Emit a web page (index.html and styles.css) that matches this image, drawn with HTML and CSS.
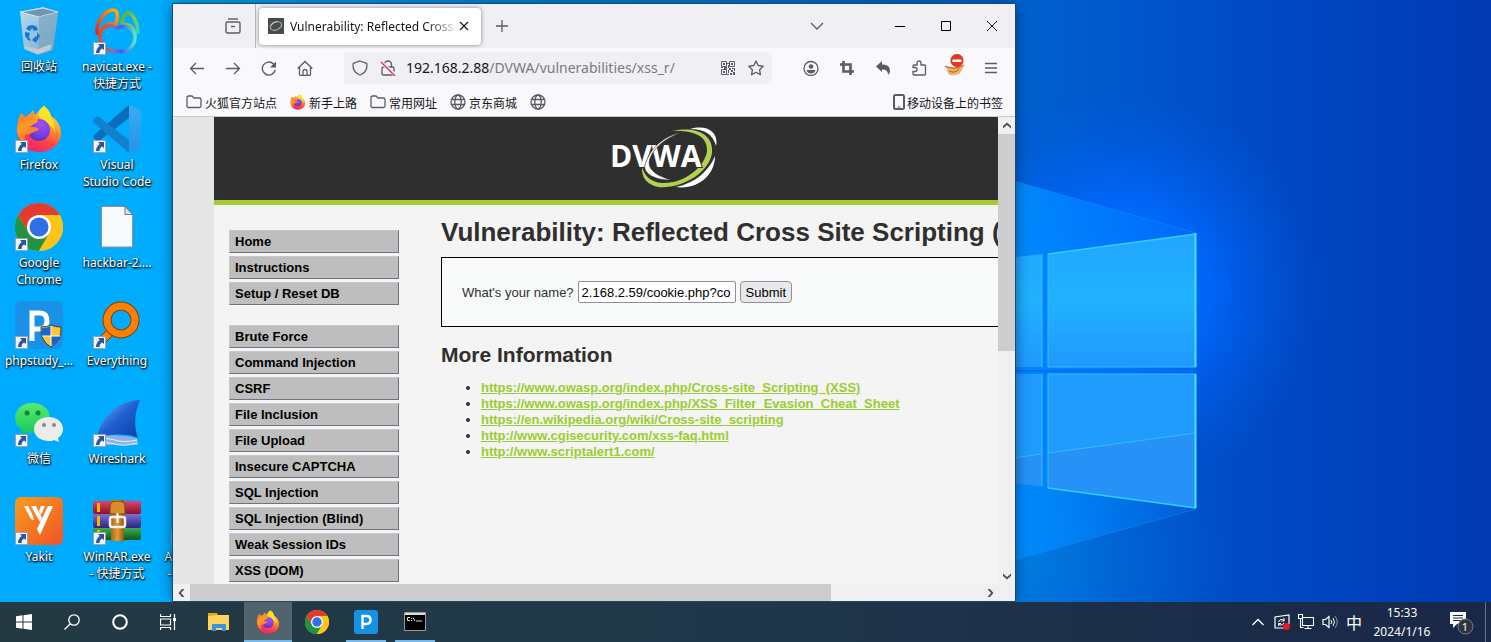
FILE: index.html
```html
<!DOCTYPE html>
<html lang="zh-CN">
<head>
<meta charset="utf-8">
<title>Desktop</title>
<link rel="stylesheet" href="styles.css">
</head>
<body>
<svg class="defs" aria-hidden="true">
  <defs>
    <linearGradient id="ff-body" x1="0.8" y1="0" x2="0.3" y2="1"><stop offset="0" stop-color="#fff44f"/><stop offset="0.35" stop-color="#ffa32c"/><stop offset="0.65" stop-color="#ff4a3f"/><stop offset="1" stop-color="#e81e74"/></linearGradient>
    <radialGradient id="ff-globe" cx="0.6" cy="0.25" r="0.8"><stop offset="0" stop-color="#a44df5"/><stop offset="0.6" stop-color="#7542e5"/><stop offset="1" stop-color="#5a2ab8"/></radialGradient>
    <linearGradient id="ff-fox" x1="0" y1="0" x2="0.4" y2="1"><stop offset="0" stop-color="#ff7139"/><stop offset="0.5" stop-color="#ff9a22"/><stop offset="1" stop-color="#ff5a35"/></linearGradient>
    <linearGradient id="vs-r" x1="0" y1="0" x2="0" y2="1"><stop offset="0" stop-color="#3aabf3"/><stop offset="1" stop-color="#2196e8"/></linearGradient>
    <linearGradient id="yak" x1="0" y1="0" x2="1" y2="1"><stop offset="0" stop-color="#fb9a1e"/><stop offset="1" stop-color="#ee5526"/></linearGradient>
    <linearGradient id="fin" x1="0" y1="0" x2="1" y2="1"><stop offset="0" stop-color="#7fb4f5"/><stop offset="0.5" stop-color="#1f5fd0"/><stop offset="1" stop-color="#0d3fa8"/></linearGradient>
    <linearGradient id="wc" x1="0" y1="0" x2="0" y2="1"><stop offset="0" stop-color="#5bea6c"/><stop offset="1" stop-color="#12c85a"/></linearGradient>
    <linearGradient id="nv-l" x1="1" y1="0" x2="0" y2="1"><stop offset="0" stop-color="#ffb400"/><stop offset="0.5" stop-color="#f26a1c"/><stop offset="1" stop-color="#e3232a"/></linearGradient>
    <linearGradient id="nv-r" x1="0" y1="0" x2="1" y2="1"><stop offset="0" stop-color="#3fae49"/><stop offset="0.5" stop-color="#8cc63f"/><stop offset="1" stop-color="#35d0c0"/></linearGradient>
    <linearGradient id="nv-b" x1="0" y1="0" x2="1" y2="0"><stop offset="0" stop-color="#d8532b"/><stop offset="0.4" stop-color="#8a6fb0"/><stop offset="0.6" stop-color="#3d5bff"/><stop offset="1" stop-color="#62e2c4"/></linearGradient>
    <linearGradient id="bin" x1="0" y1="0" x2="1" y2="1"><stop offset="0" stop-color="#b9dcee"/><stop offset="0.6" stop-color="#8fbdd8"/><stop offset="1" stop-color="#7398b4"/></linearGradient>
    <linearGradient id="rr" x1="0" y1="0" x2="0" y2="1"><stop offset="0" stop-color="#e0466a"/><stop offset="1" stop-color="#8a1030"/></linearGradient>
    <linearGradient id="rb" x1="0" y1="0" x2="0" y2="1"><stop offset="0" stop-color="#7a70d0"/><stop offset="1" stop-color="#2c2480"/></linearGradient>
    <linearGradient id="rg" x1="0" y1="0" x2="0" y2="1"><stop offset="0" stop-color="#3ab04c"/><stop offset="1" stop-color="#0b5a1c"/></linearGradient>
    <linearGradient id="belt" x1="0" y1="0" x2="1" y2="0"><stop offset="0" stop-color="#a8681a"/><stop offset="0.5" stop-color="#e59a35"/><stop offset="1" stop-color="#96580f"/></linearGradient>
    <symbol id="firefox" viewBox="0 0 48 48">
      <path d="M29 1c4 3 6 6 7 10 5 3 10 9 10 17 0 11-9 19-22 19C11 47 2 38 2 26c0-6 1-11 3-14l1-4 4 4 5-3 3-4 2 5c1 0 4-6 9-9z" fill="url(#ff-body)"/>
      <path d="M29 1c-6 4-6 9-3 13 6 5 14 7 14 15 0-8-2-13-4-17C36 8 33 4 29 1z" fill="#ffe226"/>
      <circle cx="24" cy="25" r="11" fill="url(#ff-globe)"/>
      <path d="M2 22C3 14 6 8 6 8l4 4c3-1 4-1 5-1 1-3 3-5 3-5 0 5 2 7 5 8 0 3-1 4-4 5l-4 3c4 0 6 0 9 2-3 4-7 2-10 6-3-2-4-1-4 2-1 6 4 10 9 11C10 42 1 34 2 22z" fill="url(#ff-fox)"/>
    </symbol>
    <symbol id="chrome" viewBox="0 0 48 48">
      <circle cx="24" cy="24" r="24" fill="#fbbc09"/>
      <path d="M3.200 12A24 24 0 0 1 44.800 12H24L13.600 30z" fill="#e33b2e"/>
      <path d="M3.200 12A24 24 0 0 0 24 48L34.400 30 13.600 30z" fill="#229342"/>
      <path d="M24 12H44.800A24 24 0 0 1 24 48L34.400 30z" fill="#fcc31a"/>
      <circle cx="24" cy="24" r="12" fill="#fff"/><circle cx="24" cy="24" r="9.500" fill="#2f6fe8"/>
    </symbol>
    <symbol id="shortcut" viewBox="0 0 13 13">
      <path d="M.5.500h12v12H.500z" fill="#f4f6f9" stroke="#9aa3ad"/>
      <path d="M5 2h6v6L9 6.500C7 8 6.500 9 6.500 11H3C3 8 4.500 5.500 6.800 4z" fill="#2b579a"/>
    </symbol>
    <symbol id="globe" viewBox="0 0 16 16"><g fill="none" stroke="#5b5b66" stroke-width="1.300"><circle cx="8" cy="8" r="7"/><ellipse cx="8" cy="8" rx="3.200" ry="7"/><path d="M1.500 5.500h13M1.500 10.500h13"/></g></symbol>
    <symbol id="folder" viewBox="0 0 16 16"><path d="M1 3.500Q1 2 2.500 2H6l2 2h5.500Q15 4 15 5.500v6.500q0 1.500-1.500 1.500h-11Q1 13.500 1 12z" fill="none" stroke="#5b5b66" stroke-width="1.300"/></symbol>
    <symbol id="arrow" viewBox="0 0 10 10"><path d="M1 7.500V5L5 1.500 9 5v2.500L5 4z" fill="#505050"/></symbol>
  </defs>
</svg>

<main class="desktop">
  <svg class="wallpaper" viewBox="0 0 1491 602" preserveAspectRatio="none" aria-hidden="true">
    <defs>
      <linearGradient id="base" x1="0" y1="0" x2="1" y2="0"><stop offset="0" stop-color="#00aaff"/><stop offset="0.120" stop-color="#00adfc"/><stop offset="0.350" stop-color="#0088e2"/><stop offset="0.680" stop-color="#0062cf"/><stop offset="0.820" stop-color="#004dc8"/><stop offset="1" stop-color="#0039b2"/></linearGradient>
      <radialGradient id="glow" gradientUnits="userSpaceOnUse" cx="1120" cy="290" r="200"><stop offset="0" stop-color="#0078ff"/><stop offset="0.450" stop-color="#0068ff" stop-opacity="0.850"/><stop offset="1" stop-color="#0058e0" stop-opacity="0"/></radialGradient>
      <radialGradient id="low" gradientUnits="userSpaceOnUse" cx="1000" cy="560" r="230"><stop offset="0" stop-color="#0082e4"/><stop offset="1" stop-color="#0066d8" stop-opacity="0"/></radialGradient>
      <linearGradient id="beam" x1="0" y1="0" x2="1" y2="0"><stop offset="0" stop-color="#0090ff"/><stop offset="1" stop-color="#0078ff" stop-opacity="0.200"/></linearGradient>
      <linearGradient id="pane" x1="0" y1="0" x2="0" y2="1"><stop offset="0" stop-color="#22a6ff"/><stop offset="0.500" stop-color="#20b2ff"/><stop offset="1" stop-color="#2099ff"/></linearGradient>
    </defs>
    <path d="M0 0h1491v602H0z" fill="url(#base)"/>
    <path d="M800 0h691v602H800z" fill="url(#low)"/>
    <path d="M800 0h691v602H800z" fill="url(#glow)"/>
    <path d="M1000 177l196 56v276l-196 55z" fill="url(#beam)"/>
    <path d="M1000 177l196 56M1196 509l-196 55" stroke="#1a94ff" stroke-opacity="0.400" fill="none"/>
    <path d="M1000 370h196v2h-196z" fill="#0070f0"/>
    <path d="M1000 259l42-5v113h-42zM1048 254l148-20v133h-148z" fill="url(#pane)"/>
    <path d="M1000 374h42v112l-42-4zM1048 374h148v134l-148-20z" fill="#209cff"/>
    <path d="M1000 460l42-6v32l-42-4zM1048 453l148-20v75l-148-20z" fill="#2692f8"/>
    <path d="M1000 460l42-6M1048 453l148-20M1042 254v113M1042 374v112M1048 254v113h148M1048 488V374h148" fill="none" stroke="#38baff"/>
    <path d="M1048 254l148-20M1048 488l148 20" fill="none" stroke="#2fd0ff" stroke-width="1.500"/>
    <path d="M1195.500 233v134M1195.500 374v134" stroke="#48e4ff" stroke-width="2"/>
  </svg>

  <ul class="icons">
    <li><a class="shortcut" href="#"><span class="pic"><svg viewBox="0 0 48 48"><path d="M5 5l23-5 15 5-5 38-15 5L9 42z" fill="url(#bin)"/><path d="M5 5l19 5 19-5-15-4z" fill="#6f97ad" stroke="#d7e8f0"/><path d="M24 10l19-5-5 37-15 5z" fill="#7ea5c0" opacity=".7"/><path d="M10 39l13 3 14-5-2 6-12 4-13-5z" fill="#c3cbd2"/><g fill="#1478d4"><path d="M13 19l4-1 4 1 2 4-4 1-2-3-2 3-4-2zM10 25l5 1-1 4 2 4-3-1-3-4zM22 25l3 4-3 5-1 2-4-3 4-4 1 1z"/></g></svg></span><span class="name">回收站</span></a></li>
    <li><a class="shortcut" href="#"><span class="pic"><svg viewBox="0 0 48 48" fill="none" stroke-width="3.600" stroke-linecap="round"><path d="M4 25C4 14 12 3 20 3c6 0 5 10 2 15-5-3-12 0-14 7-1 2-4 2-4 0z" stroke="url(#nv-l)"/><path d="M29 17C29 12 32 5 35 5c6 3 10 12 10 20-2 1-3 0-4-2-2-5-6-6-12-6z" stroke="url(#nv-r)"/><path d="M24 21C15 15 7 22 7 30c0 9 7 15 17 14 10 2 18-5 18-14 0-7-8-14-18-9z" stroke="url(#nv-b)"/></svg><svg class="mark"><use href="#shortcut"/></svg></span><span class="name">navicat.exe -<br>快捷方式</span></a></li>
    <li><a class="shortcut" href="#"><span class="pic"><svg><use href="#firefox"/></svg><svg class="mark"><use href="#shortcut"/></svg></span><span class="name">Firefox</span></a></li>
    <li><a class="shortcut" href="#"><span class="pic"><svg viewBox="0 0 48 48"><path d="M36 0v13L6 36q-2 1-3-1l-2-2q-1-2 0-3z" fill="#0b6dba"/><path d="M36 48V35L6 12q-2-1-3 0l-2 2q-2 2 0 4z" fill="#1380cc"/><path d="M36 0l10 4q2 1 2 3v34q0 2-2 3l-10 4z" fill="url(#vs-r)"/></svg><svg class="mark"><use href="#shortcut"/></svg></span><span class="name">Visual<br>Studio Code</span></a></li>
    <li><a class="shortcut" href="#"><span class="pic"><svg><use href="#chrome"/></svg><svg class="mark"><use href="#shortcut"/></svg></span><span class="name">Google<br>Chrome</span></a></li>
    <li><a class="shortcut" href="#"><span class="pic"><svg viewBox="0 0 48 48"><path d="M8.500 3.500H32l7.500 8v32.500h-31z" fill="#f8f9fa" stroke="#8f8f8f"/><path d="M32 3.500v8h7.500z" fill="#dfe1e3" stroke="#777"/></svg></span><span class="name">hackbar-2....</span></a></li>
    <li><a class="shortcut" href="#"><span class="pic"><svg viewBox="0 0 48 48"><rect width="48" height="48" rx="6" fill="#1a91e6"/><path d="M17 40V12h8q7 0 7 8t-8 8h-7" fill="none" stroke="#fff" stroke-width="5"/><path d="M26 26q6 0 10-2 4 2 10 2 1 14-10 20-11-6-10-20z" fill="#ffc52f" stroke="#2f3d4a"/><path d="M36 25q-4 2-9 2v8h9zM36 35h9q-2 7-9 10z" fill="#1668c8"/><path d="M36 25v20M27 35h18" stroke="#fff"/></svg><svg class="mark"><use href="#shortcut"/></svg></span><span class="name">phpstudy_...</span></a></li>
    <li><a class="shortcut" href="#"><span class="pic"><svg viewBox="0 0 48 48"><path d="M16 27L5 38l5 6 11-11z" fill="#ff8000" stroke="#804000"/><circle cx="28" cy="19" r="14" fill="none" stroke="#804000" stroke-width="9"/><circle cx="28" cy="19" r="14" fill="none" stroke="#ff8000" stroke-width="7"/></svg><svg class="mark"><use href="#shortcut"/></svg></span><span class="name">Everything</span></a></li>
    <li><a class="shortcut" href="#"><span class="pic"><svg viewBox="0 0 48 48"><path d="M17 4C7 4 0 11 0 19c0 5 3 9 7 12l-1 5 6-3c14 4 23-4 23-14C35 10 27 4 17 4z" fill="url(#wc)"/><circle cx="12" cy="14" r="2.500" fill="#0b8540"/><circle cx="23" cy="14" r="2.500" fill="#0b8540"/><path d="M34 18c-9 0-15 5-15 12s6 12 15 12c2 0 4 0 5-1l5 2-1-4c3-2 5-5 5-9 0-7-6-12-14-12z" fill="#ececec"/><circle cx="29" cy="26" r="2" fill="#888"/><circle cx="39" cy="26" r="2" fill="#888"/></svg><svg class="mark"><use href="#shortcut"/></svg></span><span class="name">微信</span></a></li>
    <li><a class="shortcut" href="#"><span class="pic"><svg viewBox="0 0 48 48"><path d="M4 38C9 17 26 2 47 1c-6 13-6 27-2 38-8-5-30-4-41-1z" fill="url(#fin)"/><path d="M3 38q20-4 41 1l1 7H2z" fill="#8fb2e6"/><path d="M4 41q10-3 18 0t22 0M4 45q10-3 18 0t22-1" stroke="#e6f0ff" fill="none"/></svg><svg class="mark"><use href="#shortcut"/></svg></span><span class="name">Wireshark</span></a></li>
    <li><a class="shortcut" href="#"><span class="pic"><svg viewBox="0 0 48 48"><rect width="48" height="48" rx="6" fill="url(#yak)"/><path d="M9 9h4l5 10 1 4-3-1zM16 9h5l6 12-2 4zM33 9h5L25 38l-3-6zM26 9h4l-4 9-2-4z" fill="#fff"/></svg><svg class="mark"><use href="#shortcut"/></svg></span><span class="name">Yakit</span></a></li>
    <li><a class="shortcut" href="#"><span class="pic"><svg viewBox="0 0 48 48"><rect y="4" width="48" height="13" rx="2" fill="url(#rr)"/><rect y="17" width="48" height="14" rx="2" fill="url(#rb)"/><rect y="31" width="48" height="12" rx="2" fill="url(#rg)"/><path d="M4 6h3v9H4zM4 19h3v10H4zM4 33h3v8H4z" fill="#f5b400"/><rect x="18" y="3" width="13" height="41" fill="url(#belt)"/><path d="M17 17V9q0-5 7.500-5T32 9v8z" fill="#d98d2c" stroke="#7a4510"/><rect x="17" y="20" width="15" height="10" rx="2" fill="none" stroke="#f0f0f0" stroke-width="2.500"/><path d="M24.500 16v10" stroke="#fff" stroke-width="2"/></svg><svg class="mark"><use href="#shortcut"/></svg></span><span class="name">WinRAR.exe<br>- 快捷方式</span></a></li>
  </ul>
  <a class="shortcut partial" href="#"><span class="pic"><svg class="mark"><use href="#shortcut"/></svg></span><span class="name">AntSword..<br>- 快捷方式</span></a>

  <section class="window" aria-label="Firefox">
    <header class="tabs">
      <button class="tool view" aria-label="Firefox View"><svg class="i16" viewBox="0 0 16 16"><g fill="none" stroke="#5b5b66" stroke-width="1.400"><path d="M3 1h10"/><rect x="1" y="4" width="14" height="11" rx="1.500"/><path d="M6 8.500h4"/></g></svg></button>
      <div class="tab">
        <svg class="i16" viewBox="0 0 16 16"><path d="M0 0h16v16H0z" fill="#454a54"/><ellipse cx="8" cy="8" rx="6" ry="3.800" transform="rotate(-25 8 8)" fill="none" stroke="#a3b56c" stroke-width="1.200"/><path d="M2 8q2-4 7-4.500" stroke="#ddd" fill="none" stroke-width=".8"/></svg>
        <span class="tab-title">Vulnerability: Reflected Cross</span>
        <button class="tab-close" aria-label="Close tab"><svg viewBox="0 0 10 10"><path d="M1 1l8 8M9 1L1 9" stroke="#15141a" stroke-width="1.200"/></svg></button>
      </div>
      <button class="tool" aria-label="New tab"><svg class="i16" viewBox="0 0 16 16"><path d="M8 2v12M2 8h12" stroke="#5b5b66" stroke-width="1.300"/></svg></button>
      <span class="spacer"></span>
      <button class="tool list-tabs" aria-label="List tabs"><svg class="i16" viewBox="0 0 16 16"><path d="M2 5l6 6 6-6" fill="none" stroke="#5b5b66" stroke-width="1.300"/></svg></button>
      <button class="caption" aria-label="Minimize"><svg viewBox="0 0 10 10"><path d="M0 5.500h10" stroke="#000"/></svg></button>
      <button class="caption" aria-label="Maximize"><svg viewBox="0 0 10 10"><path d="M.5.500h9v9h-9z" fill="none" stroke="#000"/></svg></button>
      <button class="caption" aria-label="Close"><svg viewBox="0 0 10 10"><path d="M0 0l10 10M10 0L0 10" stroke="#000" stroke-width=".9"/></svg></button>
    </header>

    <nav class="toolbar" aria-label="Navigation">
      <button class="tool" aria-label="Back"><svg class="i16" viewBox="0 0 16 16"><path d="M15 8.500H1.500M7 3L1.500 8.500 7 14" fill="none" stroke="#5b5b66" stroke-width="1.300"/></svg></button>
      <button class="tool" aria-label="Forward"><svg class="i16" viewBox="0 0 16 16"><path d="M1 8.500h13.500M9 3l5.500 5.500L9 14" fill="none" stroke="#5b5b66" stroke-width="1.300"/></svg></button>
      <button class="tool" aria-label="Reload"><svg class="i16" viewBox="0 0 16 16"><path d="M14.200 10A6.500 6.500 0 1 1 12.500 4L14 5.500" fill="none" stroke="#5b5b66" stroke-width="1.400"/><path d="M15 1.500v6H9z" fill="#5b5b66"/></svg></button>
      <button class="tool" aria-label="Home"><svg class="i16" viewBox="0 0 16 16"><path d="M.700 8.500L8 1.500l7.300 7M2.500 7v7q0 1.500 1.500 1.500h8q1.500 0 1.500-1.500V7M6 15.500v-4q0-2 2-2t2 2v4" fill="none" stroke="#5b5b66" stroke-width="1.300"/></svg></button>
      <div class="urlbar">
        <button class="inline" aria-label="Tracking protection"><svg class="i16" viewBox="0 0 16 16"><path d="M8 1l6 2q1 0 1 2c0 5-3 8.500-7 10C4 13.500 1 10 1 5q0-2 1-2z" fill="none" stroke="#5b5b66" stroke-width="1.300"/></svg></button>
        <button class="inline" aria-label="Connection not secure"><svg class="i16" viewBox="0 0 16 16"><path d="M4.500 7V4.500a3.500 3.500 0 0 1 7 0V7M3.500 7h9q1.500 0 1.500 1.500v5q0 1.500-1.500 1.500h-9Q2 15 2 13.500v-5Q2 7 3.500 7z" fill="none" stroke="#5b5b66" stroke-width="1.300"/><path d="M1 2l14 13" stroke="#f0f0f4" stroke-width="3.500"/><path d="M1 2l14 14" stroke="#e22850" stroke-width="1.300"/></svg></button>
        <div class="url" role="textbox" tabindex="0" aria-label="Address">192.168.2.88<span class="path">/DVWA/vulnerabilities/xss_r/</span></div>
        <button class="inline" aria-label="QR code"><svg class="i14" viewBox="0 0 14 14"><g fill="none" stroke="#5b5b66"><path d="M.5.500h5v5h-5zM8.500.500h5v5h-5zM.5 8.500h5v5h-5z"/></g><path d="M2 2h2v2H2zM10 2h2v2h-2zM2 10h2v2H2zM6 2h2v1H6zM7 4h1v3H7zM0 6h2v1H0zM3 6h3v2H3zM8 7h2v2H8zM11 7h3v1h-3zM10 9h2v2h-2zM7 9h1v3H7zM12 11h2v3h-2zM9 12h2v2H9zM6 13h2v1H6zM13 8h1v2h-1z" fill="#5b5b66"/></svg></button>
        <button class="inline" aria-label="Bookmark"><svg class="i16" viewBox="0 0 16 16"><path d="M8 1l2.200 4.500 4.900.700-3.500 3.500.800 5L8 12.300l-4.400 2.400.800-5L.900 6.200l4.900-.700z" fill="none" stroke="#5b5b66" stroke-width="1.300" stroke-linejoin="round"/></svg></button>
      </div>
      <button class="tool" aria-label="Account"><svg class="i16" viewBox="0 0 16 16"><circle cx="8" cy="8.500" r="7" fill="none" stroke="#5b5b66" stroke-width="1.300"/><circle cx="8" cy="6.500" r="2.300" fill="#5b5b66"/><path d="M3.500 10h9q-1 3.500-4.500 3.500T3.500 10z" fill="#5b5b66"/></svg></button>
      <button class="tool" aria-label="Screenshot"><svg class="i16" viewBox="0 0 16 16"><path d="M4.500 1v10.500H15M1 4.500h10.500V15" fill="none" stroke="#5b5b66" stroke-width="2.600"/></svg></button>
      <button class="tool" aria-label="Undo"><svg class="i16" viewBox="0 0 16 16"><path d="M1 6.500L7 1v3.500c5 0 8 2 8 6.500q0 2-2 4c0-4-2-5.500-6-5.500V12z" fill="#5b5b66"/></svg></button>
      <button class="tool" aria-label="Extensions"><svg class="i16" viewBox="0 0 16 16"><path d="M6 5V3a2 2 0 0 1 4 0v2h3.500Q14.500 5 14.500 6v8q0 1-1 1H3q-1 0-1-1v-2.500h2a2 2 0 0 0 0-4H2V6q0-1 1-1z" fill="none" stroke="#5b5b66" stroke-width="1.300"/></svg></button>
      <button class="tool blocked" aria-label="Extension blocked"><svg class="i22" viewBox="0 0 22 22"><path d="M1 12l7 1q6 1 12-2-3 8-5 9-6 2-9 1-3-2-3-6z" fill="#f2b26a"/><path d="M1 12q9 5 19-1M5 17q6 3 10-2" stroke="#a35f20" fill="none"/><circle cx="13" cy="6.500" r="6.200" fill="#e9371b" stroke="#b52a12" stroke-width=".6"/><path d="M8.500 5.500h9v2.500h-9z" fill="#fff"/></svg></button>
      <button class="tool" aria-label="Menu"><svg class="i16" viewBox="0 0 16 16"><path d="M2 3.500h12M2 8h12M2 12.500h12" stroke="#5b5b66" stroke-width="1.300"/></svg></button>
    </nav>

    <nav class="bookmarks" aria-label="Bookmarks">
      <a href="#"><svg class="i16"><use href="#folder"/></svg>火狐官方站点</a>
      <a href="#"><svg class="i16"><use href="#firefox"/></svg>新手上路</a>
      <a href="#"><svg class="i16"><use href="#folder"/></svg>常用网址</a>
      <a href="#"><svg class="i16"><use href="#globe"/></svg>京东商城</a>
      <a href="#" aria-label="Bookmark"><svg class="i16"><use href="#globe"/></svg></a>
      <span class="spacer"></span>
      <a class="mobile" href="#"><svg class="phone" viewBox="0 0 12 16"><rect x="1" y="1" width="10" height="14" rx="1.500" fill="none" stroke="#5b5b66" stroke-width="2"/><path d="M4.500 13h3" stroke="#5b5b66"/></svg>移动设备上的书签</a>
    </nav>

    <div class="viewport">
      <div class="page">
        <div class="container">
          <div class="masthead">
            <svg class="logo" viewBox="0 0 108 64" role="img" aria-label="DVWA">
              <path d="M80 4C97-1 109 7 106 21 103 9 94 4 80 4z" fill="#fff"/>
              <path d="M105 31C105 50 88 65 66 62 85 58 99 46 105 31z" fill="#fff"/>
              <path d="M62 6C84 1 104 8 102 28 99 48 72 64 48 62 38 60 31 53 32 42 35 51 40 57 52 58 74 59 95 42 97 26 98 10 82 5 62 6z" fill="#b2d153"/>
              <text class="logo-text" x="0" y="42">DVWA</text>
              <path d="M46 21C53 14 62 9 70 8 59 12 50 18 44 26 37 36 34 47 61 55 42 55 33 47 35 40 37 33 41 26 46 21z" fill="#fff" stroke="#2f2f2f" stroke-width=".6"/>
            </svg>
          </div>
          <div class="content">
            <nav class="menu" aria-label="DVWA">
              <ul><li><a href="#">Home</a></li><li><a href="#">Instructions</a></li><li><a href="#">Setup / Reset DB</a></li></ul>
              <ul><li><a href="#">Brute Force</a></li><li><a href="#">Command Injection</a></li><li><a href="#">CSRF</a></li><li><a href="#">File Inclusion</a></li><li><a href="#">File Upload</a></li><li><a href="#">Insecure CAPTCHA</a></li><li><a href="#">SQL Injection</a></li><li><a href="#">SQL Injection (Blind)</a></li><li><a href="#">Weak Session IDs</a></li><li><a href="#">XSS (DOM)</a></li></ul>
            </nav>
            <article class="main">
              <h1>Vulnerability: Reflected Cross Site Scripting (XSS)</h1>
              <form class="panel">
                <label for="name">What's your name?</label>
                <input id="name" type="text" value="2.168.2.59/cookie.php?co">
                <button type="button">Submit</button>
              </form>
              <h2>More Information</h2>
              <ul class="links">
                <li><a href="#">https://www.owasp.org/index.php/Cross-site_Scripting_(XSS)</a></li>
                <li><a href="#">https://www.owasp.org/index.php/XSS_Filter_Evasion_Cheat_Sheet</a></li>
                <li><a href="#">https://en.wikipedia.org/wiki/Cross-site_scripting</a></li>
                <li><a href="#">http://www.cgisecurity.com/xss-faq.html</a></li>
                <li><a href="#">http://www.scriptalert1.com/</a></li>
              </ul>
            </article>
          </div>
        </div>
      </div>
      <div class="vbar"><button aria-label="Scroll up"><svg><use href="#arrow"/></svg></button><div class="track"><div class="thumb"></div></div><button class="down" aria-label="Scroll down"><svg><use href="#arrow"/></svg></button></div>
      <div class="hbar"><button class="left" aria-label="Scroll left"><svg><use href="#arrow"/></svg></button><div class="track"><div class="thumb"></div></div><button class="right" aria-label="Scroll right"><svg><use href="#arrow"/></svg></button></div>
    </div>
  </section>
</main>

<footer class="taskbar">
  <div class="group">
    <button class="task" aria-label="Start"><svg class="i16" viewBox="0 0 16 16"><path d="M0 2.200L6.500 1.300V7.500H0zM7.500 1.200L16 0v7.500H7.500zM0 8.500h6.500v6.200L0 13.800zM7.500 8.500H16V16l-8.500-1.200z" fill="#fff"/></svg></button>
    <button class="task" aria-label="Search"><svg class="i16" viewBox="0 0 16 16"><circle cx="10" cy="6" r="5.200" fill="none" stroke="#fff" stroke-width="1.300"/><path d="M6.300 9.700L.500 15.500" stroke="#fff" stroke-width="1.300"/></svg></button>
    <button class="task" aria-label="Cortana"><svg class="i16" viewBox="0 0 16 16"><circle cx="8" cy="8" r="6.800" fill="none" stroke="#fff" stroke-width="2"/></svg></button>
    <button class="task" aria-label="Task view"><svg class="i16" viewBox="0 0 16 16"><path d="M.500 0v2.500h10V0M.500 16v-2.500h10V16M.500 5h10v6H.500zM14.500 0v16" fill="none" stroke="#fff" stroke-width="1.200"/><path d="M13 4h3v3h-3z" fill="#fff"/></svg></button>
  </div>
  <div class="group apps">
    <button class="task" aria-label="File Explorer"><svg class="i24" viewBox="0 0 24 24"><path d="M1 3h9l1 2h11v14H1z" fill="#e8a60c"/><path d="M1 6l10-1h11v15H1z" fill="#ffd45e"/><path d="M5 21v-6q0-1 1-1h12q1 0 1 1v6h-4v-3H9v3z" fill="#3493dc"/></svg></button>
    <button class="task active" aria-label="Firefox"><svg class="i24"><use href="#firefox"/></svg></button>
    <button class="task" aria-label="Chrome"><svg class="i24"><use href="#chrome"/></svg></button>
    <button class="task open" aria-label="phpstudy"><svg class="i24" viewBox="0 0 24 24"><rect width="24" height="24" rx="3" fill="#1592e6"/><path d="M8.500 19V6h4q4 0 4 4t-4 4h-4" fill="none" stroke="#fff" stroke-width="2.400"/></svg></button>
    <button class="task open" aria-label="Command Prompt"><svg class="i24" viewBox="0 0 24 24"><path d="M1.500 2.500h21v18h-21z" fill="#000" stroke="#9a9a9a"/><path d="M2 3h20v2H2z" fill="#dcdcdc"/><path d="M7 7.500H4.500v3H7M8.500 8v1M8.500 10v1M10 7.500l2 3.500M13 11h6" stroke="#ddd" fill="none"/></svg></button>
  </div>
  <span class="spacer"></span>
  <div class="tray">
    <button aria-label="Hidden icons"><svg class="i16" viewBox="0 0 16 16"><path d="M2.500 11L8 5.500l5.500 5.500" fill="none" stroke="#fff" stroke-width="1.300"/></svg></button>
    <button aria-label="Sync"><svg class="i16" viewBox="0 0 16 16"><path d="M12 14H1V3l14-2v9" fill="none" stroke="#fff" stroke-width="1.200"/><path d="M4.500 8q1-3 4-2.500l2 1M10 4v3H7.500M10 9q-1.500 2.500-4 2l-1.500-1M4.500 12V9.500H7" fill="none" stroke="#fff"/><circle cx="12.500" cy="12.500" r="3.500" fill="#f01428"/></svg></button>
    <button aria-label="Network"><svg class="i16" viewBox="0 0 16 16"><path d="M4.500 3.500h11v8h-11zM.500.500h4v4h-4zM2.500 5v8.500h3M10 12v2.500M6.500 14.500h7" fill="none" stroke="#fff" stroke-width="1.100"/></svg></button>
    <button aria-label="Volume"><svg class="i16" viewBox="0 0 16 16"><path d="M1 5.500h2.500L7 2.500v11l-3.500-3H1z" fill="none" stroke="#fff" stroke-width="1.200"/><path d="M9 6q1.500 2 0 4M11 4q3 4 0 8" fill="none" stroke="#fff"/><path d="M13 2q4.500 6 0 12" fill="none" stroke="#8a93a5"/></svg></button>
    <button class="ime" aria-label="Input method">中</button>
    <button class="clock"><span>15:33</span><span>2024/1/16</span></button>
    <button class="notice" aria-label="Notifications"><svg viewBox="0 0 26 26"><path d="M1 3h16v12H8l-4 4v-4H1z" fill="#fff"/><path d="M4 6.500h10M4 9h10M4 11.500h8" stroke="#1c2a42"/><circle cx="16.500" cy="17.500" r="7.500" fill="#30343c" stroke="#777c86"/></svg><span class="badge">1</span></button>
    <span class="peek"></span>
  </div>
</footer>
</body>
</html>
```

FILE: styles.css
```css
* { box-sizing: border-box; }
html, body { height: 100%; }
body {
  margin: 0;
  display: flex;
  flex-direction: column;
  overflow: hidden;
  font: 12px/17px "Noto Sans", "Noto Sans CJK SC", sans-serif;
  color: #15141a;
}
ul { list-style: none; margin: 0; padding: 0; }
a { color: inherit; text-decoration: none; }
button { margin: 0; padding: 0; border: 0; background: none; font: inherit; color: inherit; }
svg { display: block; flex: none; }
.defs { position: absolute; width: 0; height: 0; }
.i14 { width: 14px; height: 14px; }
.i16 { width: 16px; height: 16px; }
.i22 { width: 22px; height: 22px; }
.i24 { width: 24px; height: 24px; }
.spacer { flex: 1; }

/* Desktop */
.desktop { position: relative; flex: 1; min-height: 0; overflow: hidden; background: #00aaff; }
.wallpaper { position: absolute; inset: 0; width: 100%; height: 100%; }
.icons {
  position: relative;
  display: grid;
  grid-template-columns: 78px 78px;
  grid-auto-rows: 98px;
  padding-top: 7px;
}
.shortcut {
  display: flex;
  flex-direction: column;
  align-items: center;
  gap: 3px;
  color: #fff;
  text-align: center;
  text-shadow: 1px 1px 2px #000, 0 1px 2px #000;
}
.pic { position: relative; width: 48px; height: 48px; }
.pic svg { width: 48px; height: 48px; }
.pic .mark { position: absolute; left: 0; bottom: 0; width: 13px; height: 13px; }
.name { width: 76px; white-space: nowrap; }
.partial { position: absolute; left: 156px; top: 497px; width: 78px; }

/* Browser window */
.window {
  position: absolute;
  top: 4px;
  right: 476px;
  bottom: 1px;
  left: 173px;
  display: flex;
  flex-direction: column;
  background: #f9f9fb;
  box-shadow: 0 0 0 1px #1b4a70, 0 0 14px rgba(0, 20, 60, 0.6);
}
.tool { display: flex; align-items: center; justify-content: center; width: 36px; height: 36px; }
.tabs { display: flex; align-items: center; height: 44px; padding-left: 42px; background: #f0f0f4; }
.tab {
  display: flex;
  align-items: center;
  gap: 6px;
  width: 222px;
  height: 37px;
  margin: 0 3px;
  padding: 0 12px 0 9px;
  border-radius: 4px;
  background: #fff;
  box-shadow: 0 0 4px rgba(0, 0, 0, 0.45);
}
.view { width: 41px; height: 44px; padding-right: 4px; border-right: 1px solid #b8b8be; }
.tab-title {
  flex: 1;
  min-width: 0;
  overflow: hidden;
  white-space: nowrap;
  -webkit-mask-image: linear-gradient(to right, #000 84%, rgba(0, 0, 0, 0.2));
  mask-image: linear-gradient(to right, #000 84%, rgba(0, 0, 0, 0.2));
}
.tab-close svg { width: 10px; height: 10px; }
.list-tabs { margin-right: 42px; }
.caption { display: flex; align-items: center; justify-content: center; width: 46px; height: 44px; }
.caption svg { width: 10px; height: 10px; }

.toolbar { display: flex; align-items: center; height: 40px; padding: 0 6px; }
.blocked { align-items: flex-start; padding-top: 4px; }
.urlbar {
  display: flex;
  align-items: center;
  flex: 1;
  min-width: 0;
  height: 32px;
  margin: 0 21px;
  padding: 0 2px;
  border-radius: 4px;
  background: #f0f0f4;
}
.inline { display: flex; align-items: center; justify-content: center; flex: none; width: 28px; height: 28px; }
.url { flex: 1; min-width: 0; padding-left: 4px; overflow: hidden; white-space: nowrap; font: 14px/20px "Noto Sans", sans-serif; }
.path { color: #7a7a82; }

.bookmarks {
  display: flex;
  align-items: center;
  gap: 13px;
  height: 29px;
  padding: 0 12px 0 13px;
  border-bottom: 1px solid #c8c8cc;
  font-family: "Noto Sans CJK SC", sans-serif;
}
.bookmarks a { display: flex; align-items: center; gap: 3px; white-space: nowrap; }
.bookmarks .mobile { gap: 2px; }
.phone { width: 12px; height: 16px; }

/* Page area */
.viewport {
  display: grid;
  flex: 1;
  min-height: 0;
  grid-template-columns: minmax(0, 1fr) 17px;
  grid-template-rows: minmax(0, 1fr) 17px;
  background: #f0f0f0;
}
.page { overflow: hidden; padding-left: 41px; background: #e6e6e6; font-family: "Liberation Sans", Arial, sans-serif; font-size: 13px; }
.container { width: 900px; min-height: 100%; background: #f4f4f4; }
.masthead { display: flex; justify-content: center; height: 88px; padding-top: 8px; background: #2f2f2f; border-bottom: 5px solid #a5cb30; }
.logo { width: 108px; height: 64px; }
.logo-text { font: bold 30px "Open Sans", "Noto Sans", sans-serif; fill: #fff; stroke: #2f2f2f; stroke-width: 2px; paint-order: stroke; }
.content { display: flex; gap: 42px; padding: 12px 15px 0; }
.menu { flex: none; width: 170px; padding-top: 13px; }
.menu ul { margin-bottom: 20px; }
.menu li + li { margin-top: 3px; }
.menu a {
  display: block;
  padding: 3px 5px 2px;
  border: 1px solid #c8c8c8;
  border-right-color: #6a7388;
  border-bottom-color: #6a7388;
  background: #bebebe;
  color: #000;
  font-weight: bold;
  line-height: 16px;
}
.main { flex: 1; min-width: 0; color: #2f2f2f; }
h1 { margin: 0 0 9px; font-size: 26px; line-height: 31px; white-space: nowrap; }
.panel {
  display: flex;
  align-items: center;
  gap: 4px;
  height: 70px;
  padding: 0 20px;
  border: 1px solid #000;
  background: #f8fafa;
}
.panel input {
  width: 158px;
  height: 22px;
  padding: 0 3px;
  border: 1px solid #8f8f9d;
  border-radius: 2px;
  background: #fff;
  color: #000;
  font: 13px "Liberation Sans", Arial, sans-serif;
}
.panel button {
  height: 22px;
  padding: 0 5px;
  border: 1px solid #8f8f9d;
  border-radius: 4px;
  background: #e9e9ed;
  color: #000;
}
h2 { margin: 16px 0 13px; font-size: 21px; line-height: 24px; }
.links { padding-left: 40px; list-style: disc; }
.links li { line-height: 16px; white-space: nowrap; }
.links a { color: #9acd32; font-weight: bold; text-decoration: underline; }

.vbar, .hbar { display: flex; background: #f0f0f0; }
.vbar { flex-direction: column; }
.vbar button, .hbar button { display: flex; align-items: center; justify-content: center; flex: none; width: 17px; height: 17px; }
.vbar svg, .hbar svg { width: 10px; height: 10px; }
.down svg { transform: rotate(180deg); }
.left svg { transform: rotate(-90deg); }
.right svg { transform: rotate(90deg); }
.track { flex: 1; }
.thumb { background: #cdcdcd; }
.vbar .thumb { height: 50%; }
.hbar .thumb { width: 81%; height: 100%; }

/* Taskbar */
.taskbar { display: flex; flex: none; height: 40px; background: linear-gradient(to right, #233a43, #20374a 50%, #1a2b48 85%, #1a2848); color: #fff; }
.group { display: flex; }
.apps { gap: 1px; margin-left: 3px; }
.task { display: flex; align-items: center; justify-content: center; width: 48px; height: 40px; }
.active { background: #51636c; box-shadow: inset 0 -2px #76b9ed; }
.open { background: linear-gradient(#76b9ed, #76b9ed) center bottom / 40px 2px no-repeat; }
.tray { display: flex; align-items: center; }
.tray button { display: flex; align-items: center; justify-content: center; width: 24px; height: 40px; }
.tray .ime { font: 16px "Noto Sans CJK SC", sans-serif; }
.tray .clock { flex-direction: column; width: 72px; line-height: 19px; }
.tray .notice { position: relative; width: 47px; }
.notice svg { width: 26px; height: 26px; }
.badge { position: absolute; left: 21px; top: 16px; width: 12px; text-align: center; font-size: 11px; }
.peek { width: 6px; height: 40px; border-left: 1px solid #66738a; }
```
